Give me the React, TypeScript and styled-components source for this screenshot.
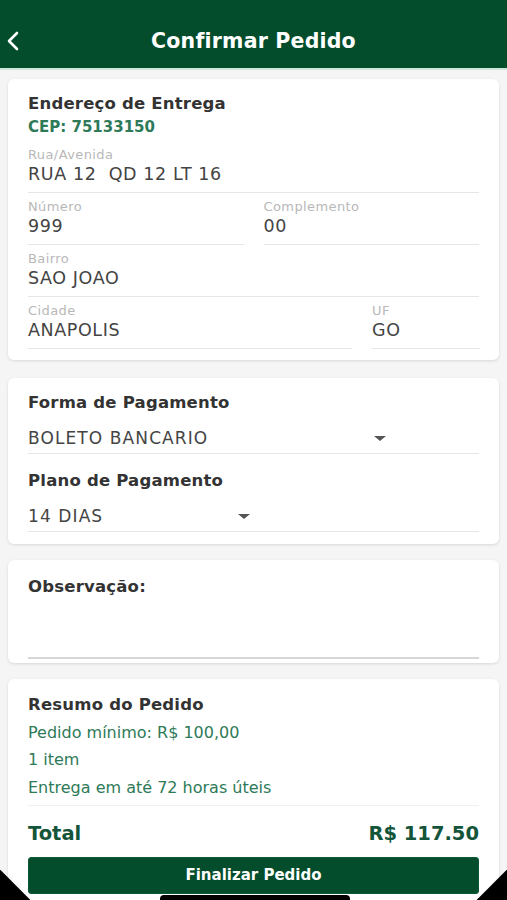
import { createGlobalStyle } from 'styled-components';
import styled from 'styled-components';

const green = '#034d2c';
const textGreen = '#2e7a58';

const GlobalStyle = createGlobalStyle`
  html, body {
    margin: 0;
    padding: 0;
    background: #f5f5f5;
    font-family: 'DejaVu Sans', 'Liberation Sans', Arial, sans-serif;
  }
  * { box-sizing: border-box; }
`;

type FieldProps = { label: string; value: string; width?: string };

function Field({ label, value, width }: FieldProps) {
  return (
    <FieldBox $width={width}>
      <FieldLabel>{label}</FieldLabel>
      <FieldValue>{value}</FieldValue>
    </FieldBox>
  );
}

function Select({ value, caretAt }: { value: string; caretAt: number }) {
  return (
    <SelectBox>
      <SelectInner style={{ width: caretAt }}>
        <span>{value}</span>
        <Caret />
      </SelectInner>
    </SelectBox>
  );
}

export default function App() {
  return (
    <Page>
      <GlobalStyle />
      <Header>
        <BackButton aria-label="voltar">
          <svg width="18" height="22" viewBox="0 0 18 22">
            <path d="M13 3 L5 11 L13 19" fill="none" stroke="#fff" strokeWidth="2.6" strokeLinecap="round" strokeLinejoin="round" />
          </svg>
        </BackButton>
        <Title>Confirmar Pedido</Title>
      </Header>

      <Content>
        <Card $pad="15px 20px 11px">
          <SectionTitle>Endereço de Entrega</SectionTitle>
          <Cep>CEP: 75133150</Cep>
          <Field label="Rua/Avenida" value="RUA 12  QD 12 LT 16" />
          <FieldRow>
            <Field label="Número" value="999" />
            <Field label="Complemento" value="00" />
          </FieldRow>
          <Field label="Bairro" value="SAO JOAO" />
          <FieldRow>
            <Field label="Cidade" value="ANAPOLIS" width="324px" />
            <Field label="UF" value="GO" width="108px" />
          </FieldRow>
        </Card>

        <Card $pad="15px 20px 12px" $gapTop={18}>
          <SectionTitle>Forma de Pagamento</SectionTitle>
          <Select value="BOLETO BANCARIO" caretAt={358} />
          <SectionTitle $top={17}>Plano de Pagamento</SectionTitle>
          <Select value="14 DIAS" caretAt={222} />
        </Card>

        <Card $pad="17px 20px 4px">
          <SectionTitle>Observação:</SectionTitle>
          <ObsArea />
        </Card>

        <Card $pad="16px 20px 8px" $grow>
          <SectionTitle>Resumo do Pedido</SectionTitle>
          <SummaryLine>Pedido mínimo: R$ 100,00</SummaryLine>
          <SummaryLine>1 item</SummaryLine>
          <SummaryLine>Entrega em até 72 horas úteis</SummaryLine>
          <Divider />
          <TotalRow>
            <span>Total</span>
            <span>R$ 117.50</span>
          </TotalRow>
          <FinishButton>Finalizar Pedido</FinishButton>
        </Card>
      </Content>

      <CornerLeft />
      <CornerRight />
      <HomeIndicator />
    </Page>
  );
}

const Page = styled.div`
  position: relative;
  width: 507px;
  height: 900px;
  overflow: hidden;
  background: #f5f5f5;
  display: flex;
  flex-direction: column;
`;

const Header = styled.header`
  height: 70px;
  background: ${green};
  border-bottom: 2px solid #cfe6da;
  display: flex;
  align-items: center;
  justify-content: center;
  position: relative;
  padding-top: 14px;
  flex-shrink: 0;
`;

const BackButton = styled.button`
  position: absolute;
  left: 4px;
  top: 30px;
  background: none;
  border: none;
  padding: 0;
  display: flex;
`;

const Title = styled.h1`
  margin: 0;
  color: #fff;
  font-size: 20.5px;
  font-weight: 700;
  letter-spacing: 0.2px;
`;

const Content = styled.main`
  flex: 1;
  display: flex;
  flex-direction: column;
  gap: 16px;
  padding: 9px 8px 0;
`;

const Card = styled.section<{ $pad: string; $grow?: boolean; $gapTop?: number }>`
  background: #fff;
  border-radius: 6px;
  box-shadow: 0 1px 3px rgba(0, 0, 0, 0.12);
  padding: ${(p) => p.$pad};
  margin-top: ${(p) => (p.$gapTop ? p.$gapTop - 16 : 0)}px;
  display: flex;
  flex-direction: column;
  flex: ${(p) => (p.$grow ? 1 : '0 0 auto')};
`;

const SectionTitle = styled.h2<{ $top?: number }>`
  margin: ${(p) => p.$top ?? 0}px 0 0;
  font-size: 16.5px;
  font-weight: 700;
  color: #333;
  line-height: 20px;
  letter-spacing: 0.2px;
`;

const Cep = styled.div`
  margin-top: 4px;
  margin-bottom: 5px;
  font-size: 15px;
  font-weight: 700;
  color: ${textGreen};
  line-height: 18px;
`;

const FieldRow = styled.div`
  display: flex;
  justify-content: space-between;
  gap: 20px;
`;

const FieldBox = styled.div<{ $width?: string }>`
  flex: ${(p) => (p.$width ? `0 0 ${p.$width}` : 1)};
  margin-top: 6px;
  padding-bottom: 7px;
  border-bottom: 1.5px solid #e6e6e6;
  display: flex;
  flex-direction: column;
`;

const FieldLabel = styled.span`
  font-size: 13px;
  color: #b8b8b8;
  line-height: 15px;
  letter-spacing: 0.4px;
`;

const FieldValue = styled.span`
  margin-top: 2px;
  font-size: 17.5px;
  color: #444;
  line-height: 21px;
  white-space: pre;
  letter-spacing: 0.6px;
`;

const SelectBox = styled.div`
  margin-top: 14.5px;
  padding-bottom: 4.5px;
  border-bottom: 1.5px solid #e6e6e6;
`;

const SelectInner = styled.div`
  display: flex;
  align-items: center;
  justify-content: space-between;
  font-size: 17px;
  color: #444;
  line-height: 21px;
  letter-spacing: 1.1px;
`;

const Caret = styled.span`
  width: 0;
  height: 0;
  border-left: 6px solid transparent;
  border-right: 6px solid transparent;
  border-top: 5px solid #555;
`;

const ObsArea = styled.div`
  height: 62px;
  border-bottom: 2px solid #d6d6d6;
`;

const SummaryLine = styled.div`
  margin-top: 7.5px;
  font-size: 16px;
  color: ${textGreen};
  line-height: 20px;
`;

const Divider = styled.div`
  margin-top: 7px;
  border-top: 1px solid #f0f0f0;
`;

const TotalRow = styled.div`
  margin-top: 16px;
  display: flex;
  justify-content: space-between;
  font-size: 19.5px;
  font-weight: 700;
  color: #14553a;
  line-height: 24px;
`;

const FinishButton = styled.button`
  margin-top: 11px;
  height: 37px;
  border: 1px solid #0a5a36;
  border-radius: 3px;
  background: ${green};
  color: #fff;
  font-family: inherit;
  font-size: 15px;
  font-weight: 700;
`;

const CornerLeft = styled.div`
  position: absolute;
  left: -36px;
  bottom: -36px;
  width: 60px;
  height: 60px;
  background: #000;
  transform: rotate(45deg);
`;

const CornerRight = styled(CornerLeft)`
  left: auto;
  right: -36px;
`;

const HomeIndicator = styled.div`
  position: absolute;
  left: 160px;
  bottom: -3px;
  width: 190px;
  height: 8px;
  border-radius: 4px;
  background: #000;
`;
